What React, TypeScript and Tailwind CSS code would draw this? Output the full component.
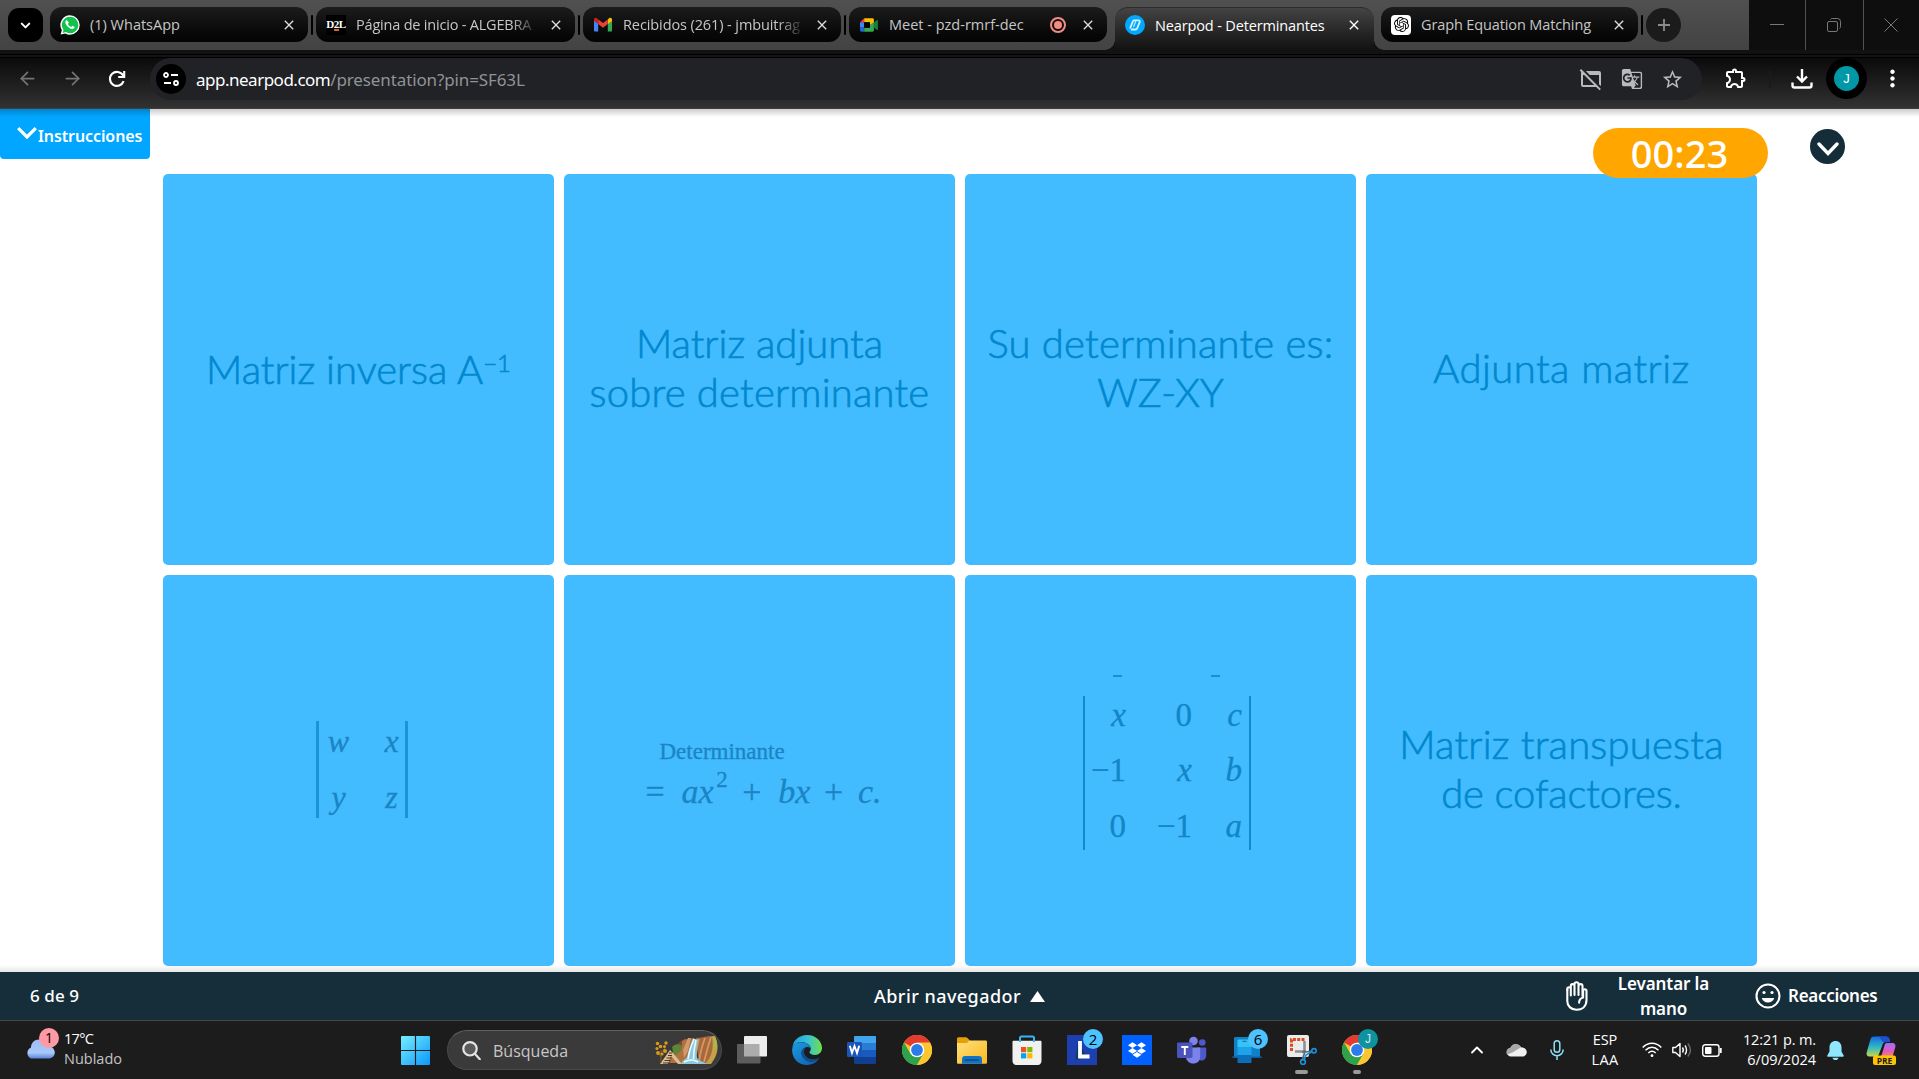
import type { ReactNode } from "react";
import {
  MdClose,
  MdGTranslate,
  MdMoreVert,
  MdOutlineExtension,
  MdStarBorder,
  MdWebAssetOff,
} from "react-icons/md";
import { FaDropbox } from "react-icons/fa6";
import { SiOpenai } from "react-icons/si";
import { ArrowLeft, ArrowRight, ChevronDown, ChevronUp } from "lucide-react";

/* ---------- Favicons ---------- */

function WhatsAppIcon() {
  return (
    <svg viewBox="0 0 20 20" className="size-5">
      <path d="M10 0.3a9.7 9.7 0 0 1 0 19.4c-1.7 0-3.3-.4-4.700-1.200L.6 19.600l1.300-4.500A9.700 9.700 0 0 1 10 .3z" fill="#fff" />
      <path d="M10 1.700a8.300 8.300 0 1 1-4.300 15.400l-3.100.8.900-3A8.300 8.300 0 0 1 10 1.700z" fill="#12c24c" />
      <path d="M7.200 5.600c-.3-.5-.9-.5-1.300 0-1.200 1.500-.5 3.500 1.400 5.700 2 2.200 4.700 3.500 6.400 2.300.9-.7 1-1.600.7-1.900l-1.900-.9c-.5-.2-.7.800-1.300 1.100-.6.200-3.300-2.100-3.200-2.900.1-.5.900-.8.700-1.400z" fill="#fff" />
    </svg>
  );
}

function D2LIcon() {
  return (
    <div className="flex size-5 flex-col items-center justify-center bg-black font-['Liberation_Serif',serif] text-[11px] leading-[10px] font-bold tracking-[-0.4px] text-white">
      <span>D2L</span>
      <span className="h-[2px] w-[5px] bg-[#d9622b]" />
    </div>
  );
}

function GmailIcon() {
  return (
    <svg viewBox="0 0 20 20" className="size-5">
      <path d="M1 5v10.500c0 .6.400 1 1 1h3.200V8z" fill="#4285f4" />
      <path d="M19 5v10.500c0 .6-.4 1-1 1h-3.200V8z" fill="#34a853" />
      <path d="M14.800 4.500V9L19 5.900V4.600c0-1.500-1.700-2.400-2.900-1.400z" fill="#fbbc04" />
      <path d="M5.200 9V4.500L10 8.100l4.800-3.600V9L10 12.700z" fill="#ea4335" />
      <path d="M1 4.600v1.300L5.200 9V4.500L3.900 3.300C2.700 2.300 1 3.100 1 4.600z" fill="#c5221f" />
    </svg>
  );
}

function MeetIcon() {
  return (
    <svg viewBox="0 0 20 20" className="size-5">
      <path d="M1 7.300h4.200v5.400H1z" fill="#4285f4" />
      <path d="M1 12.700h4.200v4H2.400c-.8 0-1.400-.6-1.400-1.400z" fill="#1967d2" />
      <path d="M5.200 3.200v4.100H1z" fill="#ea4335" />
      <path d="M5.200 3.200h8.300c.8 0 1.400.6 1.400 1.400v3.200L11 10.300V7.300H5.200z" fill="#fbbc04" />
      <path d="M5.200 12.700H11V9.600l3.900-2.200v7.900c0 .8-.6 1.400-1.400 1.400H5.200z" fill="#34a853" />
      <path d="M14.900 7.500l3-2.500c.4-.3 1 0 1 .5v9c0 .5-.6.800-1 .5l-3-2.500z" fill="#188038" />
      <path d="M5.200 7.300H11v5.400H5.200z" fill="#000" />
    </svg>
  );
}

function NearpodIcon() {
  return (
    <svg viewBox="0 0 20 20" className="size-5">
      <circle cx="10" cy="10" r="10" fill="#00a8ff" />
      <path d="M5 13.300L8 6.200c.3-.6.700-.9 1.300-.9h4.300c1 0 1.500.6 1.200 1.500l-2.700 6.700c-.3.700-.7 1-1.400 1H5.900" fill="none" stroke="#fff" strokeWidth="1.800" strokeLinejoin="round" opacity=".85" />
      <path d="M8.500 12l2.300-5.800" stroke="#fff" strokeWidth="1.100" opacity=".8" />
    </svg>
  );
}

/* ---------- Browser window ---------- */

function Tab({
  icon,
  title,
  extra,
  className,
  textClass,
}: {
  icon: ReactNode;
  title: string;
  extra?: ReactNode;
  className: string;
  textClass: string;
}) {
  return (
    <div className={`mt-[7px] flex h-[35px] items-center rounded-[12px] bg-linear-to-b from-[#1c1c1c] to-[#040404] pr-[11px] pl-[10px] text-[#c6c6c6] ${className}`}>
      {icon}
      <span className={`mt-px ml-[10px] flex-1 whitespace-nowrap ${textClass}`}>{title}</span>
      {extra}
      <MdClose className="ml-[9px] size-[16px] shrink-0 text-[#dedede]" />
    </div>
  );
}

function Divider() {
  return <div className="mx-[3px] mt-[15px] h-5 w-[2px] rounded-full bg-black" />;
}

function TabStrip() {
  return (
    <div className="flex h-[50px] items-start bg-linear-to-b from-[#505050] to-[#434343] font-['Open_Sans',sans-serif] text-[14.5px]">
      <div className="mt-2 ml-2 flex h-[34px] w-[35px] items-center justify-center rounded-[11px] bg-black text-white">
        <ChevronDown className="size-[15px]" strokeWidth={3.200} />
      </div>
      <Tab className="ml-[7px] w-[258px]" icon={<WhatsAppIcon />} title="(1) WhatsApp" textClass="" />
      <Divider />
      <Tab
        className="w-[259px]"
        icon={<D2LIcon />}
        title="Página de inicio - ALGEBRA"
        textClass="tracking-[-0.2px] mask-r-from-85% mask-r-to-100%"
      />
      <Divider />
      <Tab
        className="w-[258px]"
        icon={<GmailIcon />}
        title="Recibidos (261) - jmbuitrag"
        textClass="tracking-[-0.1px] mask-r-from-85% mask-r-to-100%"
      />
      <Divider />
      <Tab
        className="w-[258px]"
        icon={<MeetIcon />}
        title="Meet - pzd-rmrf-dec"
        textClass=""
        extra={
          <span className="mr-[5px] flex size-4 items-center justify-center rounded-full border-2 border-[#f28b82]">
            <span className="size-2 rounded-full bg-[#f28b82]" />
          </span>
        }
      />
      <div className="relative mt-[7px] ml-[8px] flex h-[43px] w-[259px] rounded-t-[13px] border-t border-[#2c2c2c] bg-linear-to-b from-[#444] to-[#121212] pr-[12px] pl-[10px] text-white">
        <span className="absolute bottom-0 -left-[10px] size-[10px] bg-[radial-gradient(circle_at_top_left,transparent_9.5px,#121212_10px)]" />
        <span className="absolute -right-[10px] bottom-0 size-[10px] bg-[radial-gradient(circle_at_top_right,transparent_9.5px,#121212_10px)]" />
        <div className="flex h-[34px] w-full items-center">
          <NearpodIcon />
          <span className="mt-px ml-[10px] flex-1 tracking-[-0.14px] whitespace-nowrap">Nearpod - Determinantes</span>
          <MdClose className="size-[16px] text-white" />
        </div>
      </div>
      <Tab
        className="ml-[7px] w-[257px]"
        icon={
          <span className="flex size-5 items-center justify-center rounded-[4px] bg-white text-black">
            <SiOpenai className="size-[15px]" />
          </span>
        }
        title="Graph Equation Matching"
        textClass="tracking-[-0.12px]"
      />
      <Divider />
      <div className="mt-2 flex h-[34px] w-[35px] items-center justify-center rounded-full bg-[#1b1b1b]">
        <svg viewBox="0 0 14 14" className="size-[14px]" stroke="#8c8c8c" strokeWidth="1.800">
          <path d="M7 1v12M1 7h12" />
        </svg>
      </div>
      <div className="ml-auto flex h-[50px] w-[170px] divide-x divide-[#525252] bg-[#0e0e0e] text-[#787878]">
        <div className="flex w-[57px] items-center justify-center">
          <svg viewBox="0 0 14 14" className="size-[14px]" stroke="currentColor"><path d="M0 6.500h14" /></svg>
        </div>
        <div className="flex w-[58px] items-center justify-center pr-[2px]">
          <svg viewBox="0 0 14 14" className="size-[14px]" stroke="currentColor" fill="none">
            <rect x=".5" y="3.500" width="10" height="10" rx="1.500" />
            <path d="M3.500 1.500c.4-.6 1-1 1.800-1h5.200a3 3 0 0 1 3 3v5.200c0 .8-.4 1.400-1 1.800" />
          </svg>
        </div>
        <div className="flex flex-1 items-center justify-center pr-[2px]">
          <svg viewBox="0 0 14 14" className="size-[14px]" stroke="currentColor"><path d="M.5.5l13 13M13.500.5l-13 13" /></svg>
        </div>
      </div>
    </div>
  );
}

function Toolbar() {
  return (
    <div className="flex h-[59px] flex-col font-['Noto_Sans',sans-serif]">
      <div className="h-1 bg-[#121212]" />
      <div className="h-px bg-black" />
      <div className="h-[2px] bg-[#141414]" />
      <div className="h-px bg-black" />
      <div className="flex h-[51px] items-start border-b border-[#423e3e] bg-linear-to-b from-[#0b0b0b] to-[#323232]">
        <ArrowLeft className="mt-[10px] ml-[17px] size-[21px] text-[#747474]" strokeWidth={2} />
        <ArrowRight className="mt-[10px] ml-[24px] size-[21px] text-[#747474]" strokeWidth={2} />
        <svg viewBox="0 0 18 18" className="mt-[12px] ml-[25px] size-[18px]" fill="none" stroke="#fff" strokeWidth="2.100">
          <path d="M15.600 11.200A7 7 0 1 1 15 5.300l1 1.200" />
          <path d="M16.200 1v6h-6" />
        </svg>
        <div className="ml-[24px] flex h-[42px] w-[1552px] items-center rounded-[21px] bg-[#202226]">
          <div className="ml-[6px] flex size-[30px] items-center justify-center rounded-full bg-black">
            <svg viewBox="0 0 16 16" className="size-4" fill="none" stroke="#fff" strokeWidth="1.800">
              <circle cx="3" cy="4" r="2" />
              <path d="M8 4h7M1 12h7" />
              <circle cx="13" cy="12" r="2" />
            </svg>
          </div>
          <div className="mt-px ml-[10px] text-[17px] text-[#909396]">
            <span className="tracking-[-0.5px] text-white">app.nearpod.com</span>
            <span className="tracking-[-0.12px]">/presentation?pin=SF63L</span>
          </div>
          <div className="ml-auto flex items-center gap-[18px] pr-[18px] text-[#b9babb]">
            <MdWebAssetOff className="size-[24px]" />
            <MdGTranslate className="size-[22px]" />
            <MdStarBorder className="size-[23px]" />
          </div>
        </div>
        <MdOutlineExtension className="mt-[8px] ml-[22px] size-[24px] text-white" />
        <div className="mt-[12px] ml-[21px] h-[18px] w-[2px] bg-[#1a1a1a]" />
        <svg viewBox="0 0 22 20" className="mt-[11px] ml-[20px] h-5 w-[22px]" fill="none" stroke="#fff" strokeWidth="2.400">
          <path d="M11 0v12M6 7.500l5 5 5-5M1.500 13.500v3c0 1.200.800 2 2 2h15c1.200 0 2-.8 2-2v-3" />
        </svg>
        <div className="ml-[13px] flex size-[41px] items-center justify-center rounded-full bg-black">
          <div className="flex size-[25px] items-center justify-center rounded-full bg-[#0097a7] font-['Liberation_Sans',sans-serif] text-[13px] text-white">J</div>
        </div>
        <MdMoreVert className="mt-[7px] ml-[12px] size-[27px] text-white" />
      </div>
    </div>
  );
}

/* ---------- Memory board ---------- */

function Card({ children }: { children: ReactNode }) {
  return (
    <div className="flex h-[391px] flex-col items-center justify-center rounded-[5px] bg-[#42bcff] text-[40px] leading-[49px] font-light whitespace-nowrap text-[#0288cf]">
      {children}
    </div>
  );
}

function CardText({ children }: { children: ReactNode }) {
  return (
    <div className="-mt-[3px] flex flex-col items-center font-['Lato',sans-serif] [-webkit-text-stroke:0.7px_#0288cf]">
      {children}
    </div>
  );
}

function WxyzDeterminant() {
  return (
    <div className="mb-[3px] ml-[7px] grid h-[97px] w-[92px] grid-cols-2 grid-rows-[56px_41px] border-x-[3px] border-[#1b94d7] text-center font-['Liberation_Serif',serif] text-[32px] leading-[40px] font-normal text-[#1b84c4] italic [-webkit-text-stroke:0.3px_#1b84c4]">
      <span className="mr-1">w</span>
      <span className="ml-4">x</span>
      <span className="mr-1">y</span>
      <span className="ml-4">z</span>
    </div>
  );
}

function QuadraticDeterminant() {
  return (
    <div className="mt-[9px] ml-2 w-[236px] font-['Liberation_Serif',serif] font-normal text-[#1b84c4] [-webkit-text-stroke:0.3px_#1b84c4]">
      <div className="ml-[14px] text-[23px] leading-[30px]">Determinante</div>
      <div className="mt-[4px] flex text-[34px] leading-[42px]">
        <span className="w-9">=</span>
        <span className="w-[35px] italic">ax</span>
        <span className="-mt-[9px] w-[26px] text-[23px] leading-[36px]">2</span>
        <span className="w-[36px]">+</span>
        <span className="w-[46px] italic">bx</span>
        <span className="w-[34px]">+</span>
        <span className="italic">c.</span>
      </div>
    </div>
  );
}

function CubicDeterminant() {
  return (
    <div className="-mt-[17px] ml-[13px] w-[168px] font-['Liberation_Serif',serif] font-normal text-[#1285c8] [-webkit-text-stroke:0.3px_#1285c8]">
      <div className="flex h-[21px] items-start pl-[30px]">
        <span className="h-[2px] w-[9px] bg-[#178fd4]" />
        <span className="ml-[89px] h-[2px] w-[9px] bg-[#178fd4]" />
      </div>
      <div className="grid h-[154px] grid-cols-[41px_66px_50px] grid-rows-[55px_56px_43px] border-x-2 border-[#1288ce] text-right text-[33px] leading-[38px]">
        <i>x</i>
        <span>0</span>
        <i>c</i>
        <span>−1</span>
        <i>x</i>
        <i>b</i>
        <span>0</span>
        <span>−1</span>
        <i>a</i>
      </div>
    </div>
  );
}

function Lesson() {
  return (
    <div className="relative h-[863px] overflow-hidden bg-white font-['Noto_Sans',sans-serif]">
      <div className="grid grid-cols-[repeat(4,391px)] gap-[10px] pt-[65px] pl-[163px]">
        <Card>
          <CardText>
            <span className="mt-[3px] flex">
              Matriz inversa A
              <span className="-mt-[7px] text-[24px]">−1</span>
            </span>
          </CardText>
        </Card>
        <Card>
          <CardText>
            <span>Matriz adjunta</span>
            <span className="tracking-[0.2px]">sobre determinante</span>
          </CardText>
        </Card>
        <Card>
          <CardText>
            <span className="tracking-[0.2px]">Su determinante es:</span>
            <span>WZ-XY</span>
          </CardText>
        </Card>
        <Card>
          <CardText>
            <span className="tracking-[0.450px]">Adjunta matriz</span>
          </CardText>
        </Card>
        <Card>
          <WxyzDeterminant />
        </Card>
        <Card>
          <QuadraticDeterminant />
        </Card>
        <Card>
          <CubicDeterminant />
        </Card>
        <Card>
          <CardText>
            <span className="tracking-[0.2px]">Matriz transpuesta</span>
            <span className="tracking-[-0.1px]">de cofactores.</span>
          </CardText>
        </Card>
      </div>

      <button className="absolute top-0 left-0 flex h-[50px] w-[150px] items-center rounded-b-[4px] bg-[#00a6ff] pl-[17px] text-white">
        <svg viewBox="0 0 20 12" className="mb-[2px] h-3 w-5" fill="none" stroke="#fff" strokeWidth="3.200">
          <path d="M1.200 1.200L10 10l8.800-8.800" />
        </svg>
        <span className="mt-[3px] ml-px text-[16px] font-semibold tracking-[-0.1px]">Instrucciones</span>
      </button>
      <div className="absolute top-[19px] right-[151px] flex h-[50px] w-[175px] items-center justify-center rounded-full bg-[#ffa700] pr-[2px] text-[38px] font-medium text-white">
        <span>00:23</span>
      </div>
      <button className="absolute top-5 right-[74px] flex size-[35px] items-center justify-center rounded-full bg-[#152c39]">
        <svg viewBox="0 0 22 14" className="mt-1 h-[14px] w-[22px]" fill="none" stroke="#fff" strokeWidth="3.400" strokeLinecap="round">
          <path d="M2 2l9 9.500L20 2" />
        </svg>
      </button>
      <div className="absolute inset-x-0 top-0 h-2 bg-linear-to-b from-black/20 to-transparent" />
      <div className="absolute inset-x-0 bottom-0 h-[7px] bg-linear-to-t from-black/10 to-transparent" />
    </div>
  );
}

function LessonFooter() {
  return (
    <div className="flex h-12 items-center bg-[#162e3a] font-['Noto_Sans',sans-serif] text-[17px] font-medium text-white">
      <span className="w-[874px] pl-[30px] tracking-[0.1px]">6 de 9</span>
      <span className="flex w-[692px] items-center text-[18px] tracking-[0.450px]">
        Abrir navegador
        <svg viewBox="0 0 15 11" className="ml-[9px] h-[11px] w-[15px]" fill="#fff">
          <path d="M7.500 0L15 11H0z" />
        </svg>
      </span>
      <svg viewBox="0 0 22 30" className="h-[30px] w-[22px]" fill="none" stroke="#fff" strokeWidth="2.100" strokeLinecap="round" strokeLinejoin="round">
        <path d="M1.300 8.500v11.700c0 5 4 8.600 9.200 8.600 5.500 0 9.800-3.200 10-9.500V10c0-2.400-3.400-2.400-3.400 0v6.500c-2.600.7-4 2.600-4 5.300" />
        <path d="M1.300 9V8c0-2.400 3.500-2.400 3.500 0v6.500V5c0-2.500 3.700-2.500 3.700 0v9V3c0-2.400 4-2.400 4 0v11V5c0-2.500 4-2.500 4 0v10" />
      </svg>
      <span className="ml-[27px] w-[97px] text-center text-[17px] leading-[25px] font-semibold tracking-[-0.1px]">
        Levantar la mano
      </span>
      <svg viewBox="0 0 26 26" className="ml-[43px] size-[26px]" fill="none">
        <circle cx="13" cy="13" r="11.500" stroke="#fff" strokeWidth="2.100" />
        <circle cx="9" cy="9.500" r="1.600" fill="#fff" />
        <circle cx="17" cy="9.500" r="1.600" fill="#fff" />
        <path d="M6.800 15h12.400c-.7 2.800-3.200 4.500-6.200 4.500S7.500 17.800 6.800 15z" fill="#fff" />
      </svg>
      <span className="ml-[7px] text-[17px] font-semibold tracking-[-0.3px]">Reacciones</span>
    </div>
  );
}

/* ---------- Taskbar ---------- */

function AppSlot({ children, badge, indicator }: { children: ReactNode; badge?: ReactNode; indicator?: string }) {
  return (
    <div className="relative flex h-[58px] w-[55px] items-center justify-center pb-px">
      {children}
      {badge}
      {indicator && <span className={`absolute bottom-[5px] h-1 rounded-full bg-[#9a9a9a] ${indicator}`} />}
    </div>
  );
}

function CountBadge({ children }: { children: ReactNode }) {
  return (
    <span className="absolute top-[8px] left-[29px] flex size-5 items-center justify-center rounded-full bg-[#4cc2ff] text-[15px] leading-none text-black">
      {children}
    </span>
  );
}

function ChromeIcon() {
  return (
    <svg viewBox="0 0 30 30" className="size-[30px]">
      <circle cx="15" cy="15" r="15" fill="#f9c32d" />
      <path d="M15 15L2 7.500A15 15 0 0 1 28 7.500z" fill="#e43b30" />
      <path d="M2 7.500A15 15 0 0 0 15 30l6.500-11.200H15L8.500 18.700z" fill="#2da14c" />
      <path d="M15 7.500h13A15 15 0 0 1 15 30l6.500-11.200z" fill="#fbc62f" />
      <circle cx="15" cy="15" r="7.300" fill="#fff" />
      <circle cx="15" cy="15" r="5.900" fill="#2c7be9" />
    </svg>
  );
}

function EdgeIcon() {
  return (
    <svg viewBox="0 0 30 30" className="size-[30px]">
      <defs>
        <linearGradient id="edgeTop" x1="0" x2="1">
          <stop offset="0" stopColor="#1f9fe0" />
          <stop offset=".5" stopColor="#35c1d6" />
          <stop offset="1" stopColor="#6ee04c" />
        </linearGradient>
        <linearGradient id="edgeLow" x1="0" y1="0" x2="1" y2="1">
          <stop offset="0" stopColor="#1b9de2" />
          <stop offset="1" stopColor="#0f5ba8" />
        </linearGradient>
      </defs>
      <path d="M.3 13C1 5 7.500 0 15 0c9 0 15 6.500 15 13 0 4-3 7-7 7-3.500 0-5.500-1.300-5.500-2.400 0-1 1.300-1.500 1.300-4C18.800 10 14 7 9 7 5 7 1.500 9.500.3 13z" fill="url(#edgeTop)" />
      <path d="M.2 14C.8 10 4.500 7.300 9 7.300c5 0 9.500 3 9.600 6.300-1.600-2.600-7-2-8.600 2-2 5 2.500 11 9 11 3.500 0 6-1.300 7.500-2.300C24 28 19.800 30 15 30 6.500 30-.6 23 .2 14z" fill="url(#edgeLow)" />
      <path d="M10 15.600c-2 5 2.500 11 9 11 3.500 0 6-1.300 7.500-2.300l1-1.500c-8 3.700-15.500 0-15.500-6 0-2 1-3.500 2.300-4.300-1.900.1-3.500 1.300-4.300 3.100z" fill="#0d4f92" />
    </svg>
  );
}

function WordIcon() {
  return (
    <svg viewBox="0 0 30 30" className="size-[30px]">
      <path d="M7 2.200C7 1.500 7.500 1 8.200 1h20c.5 0 .8.500.8 1.200V8H7z" fill="#41a5ee" />
      <path d="M7 8h22v7H7z" fill="#2b7cd3" />
      <path d="M7 15h22v7H7z" fill="#185abd" />
      <path d="M7 22h22v5.800c0 .7-.4 1.200-1 1.200H8.200c-.7 0-1.200-.5-1.200-1.200z" fill="#103f91" />
      <rect y="7" width="15" height="15" rx="1.300" fill="#1a56b8" />
      <path d="M2.800 10.800L5 18l2.500-7 2.500 7 2.200-7.200" fill="none" stroke="#fff" strokeWidth="1.900" />
    </svg>
  );
}

function FolderIcon() {
  return (
    <svg viewBox="0 0 30 30" className="size-[30px]">
      <defs>
        <linearGradient id="folder" x1="0" y1="0" x2="1" y2="1">
          <stop offset="0" stopColor="#ffe07a" />
          <stop offset="1" stopColor="#f9b821" />
        </linearGradient>
      </defs>
      <path d="M0 4c0-1 .6-1.800 1.600-1.800h7.200c.7 0 1.200.2 1.600.7L13 5.500V12H0z" fill="#e3a008" />
      <path d="M0 9.500V8h10l2.500-2.500h16c1 0 1.500.6 1.500 1.500v20.500c0 .8-.6 1.300-1.300 1.300H1.300C.5 28.800 0 28.300 0 27.500z" fill="url(#folder)" />
      <path d="M5 28.800V24c0-1.700 1.200-3 3-3h14c1.800 0 3 1.300 3 3v4.800z" fill="#1272c4" />
      <path d="M8.500 25h13" stroke="#0a4a86" strokeWidth="1.400" strokeLinecap="round" />
    </svg>
  );
}

function StoreIcon() {
  return (
    <svg viewBox="0 0 30 30" className="size-[30px]">
      <path d="M.5 7c0-.8.500-1.300 1.200-1.300h26.600c.7 0 1.200.5 1.200 1.300v19c0 2.200-1.500 4-3.700 4H4.200C2 30 .5 28.200.5 26z" fill="#f1f1f1" />
      <path d="M8 7V3c0-1 .5-1.500 1.500-1.500h11c1 0 1.500.5 1.500 1.500v4" fill="none" stroke="#35b6f2" strokeWidth="2" />
      <path d="M9 12h5.200v5.200H9z" fill="#f25022" />
      <path d="M15.200 12h5.200v5.200h-5.200z" fill="#7fba00" />
      <path d="M9 18.200h5.200v5.200H9z" fill="#00a4ef" />
      <path d="M15.200 18.200h5.200v5.200h-5.200z" fill="#ffb900" />
    </svg>
  );
}

function TeamsIcon() {
  return (
    <svg viewBox="0 0 30 30" className="size-[30px]">
      <circle cx="25.300" cy="7.500" r="3.300" fill="#5059c9" />
      <circle cx="16.500" cy="6" r="4.300" fill="#7b83eb" />
      <path d="M20 12.500h8c.7 0 1.200.5 1.200 1.200v6.500c0 3-2 5.300-4.700 5.300-2.600 0-4.500-2-4.500-4.500z" fill="#5059c9" />
      <path d="M9 12.500h13c.7 0 1.200.5 1.200 1.200v8c0 4-3 6.800-7 6.800S9 25.500 9 21.700z" fill="#7b83eb" />
      <rect y="7.500" width="15.500" height="15.500" rx="1.300" fill="#4b53bc" />
      <path d="M4.300 12h7M7.800 12v8" stroke="#fff" strokeWidth="1.900" />
    </svg>
  );
}

function PhoneLinkIcon() {
  return (
    <svg viewBox="0 0 30 30" className="size-[30px]">
      <path d="M2 3.500C2 2.500 2.500 2 3.500 2h23c1 0 1.500.5 1.500 1.500V22H2z" fill="#1080c8" />
      <path d="M0 21.500h30c0 1-.6 1.600-1.600 1.600H1.600C.6 23.100 0 22.500 0 21.500z" fill="#0c5f9e" />
      <path d="M5.500 6c0-1 .5-1.500 1.500-1.500h11c1 0 1.500.5 1.500 1.500v6h-14z" fill="#35c3f5" />
      <path d="M5.500 12h14v8h-14z" fill="#1ea3e8" />
      <path d="M5.500 20h14v7c0 .6-.4 1-1 1h-12c-.6 0-1-.4-1-1z" fill="#0c6db8" />
      <path d="M10.500 6.300h4" stroke="#0c5f9e" strokeWidth="1" />
    </svg>
  );
}

function SnipIcon() {
  return (
    <svg viewBox="0 0 30 30" className="size-[30px]">
      <rect width="22" height="22" rx="2" fill="#ebebeb" />
      <path d="M4.500 16V4.500H18" fill="none" stroke="#dc4a1d" strokeWidth="3" strokeDasharray="3 1.300" />
      <path d="M8 16.500h9.500M17.500 6v11" stroke="#8b9299" strokeWidth="2.600" />
      <path d="M17.500 15v3l-2 6M15 17h4l6-1" fill="none" stroke="#5e6b75" strokeWidth="1.700" />
      <circle cx="27" cy="15.800" r="2.200" fill="none" stroke="#1a93dc" strokeWidth="1.600" />
      <circle cx="16" cy="27" r="2.400" fill="none" stroke="#1a93dc" strokeWidth="1.600" />
      <path d="M17 25l2-5 5.800-3.300" fill="none" stroke="#1a93dc" strokeWidth="1.700" />
    </svg>
  );
}

function CanyonArt() {
  return (
    <svg viewBox="0 0 64 30" className="h-[30px] w-[64px]">
      <path d="M14 28c2-9 8-19 16-24 4 1 6-1 9-1l-3 12-5 13z" fill="#b07040" />
      <path d="M27 5c-4 3-7 7-9 12l4 2 5-7z" fill="#7d4a2a" />
      <path d="M33 3l-5 12 1 8 4-7 3-13z" fill="#d09a6c" />
      <path d="M41 3c6 0 11-2.500 18-2 3 4 4 9 3.500 14-.5 6-4 11-9 14H44z" fill="#a9683b" />
      <path d="M44 4c-2 7-3 14-4 21M50 3c-3 8-5 15-6 24M56 2c-3 9-5 17-7 25" fill="none" stroke="#d19a62" strokeWidth="1.800" />
      <path d="M57 1.500c3-1 3-.5 4 2 3 8 1 18-5 25.500h-6c7-7 9-17 7-27.500z" fill="#c3a24a" />
      <path d="M58 3c1 4 1 9 0 13l4-3c0-4-.5-8-2-11z" fill="#a9b84a" />
      <path d="M38 3.500c-3 7-5 14-6 19-3 2-5 4-6 6.500h26c-3-2-9-3-10-6.500-1-4 0-12 1-18z" fill="#8cc8de" />
      <path d="M39 4c-3 7-5 13-6 20M41 5c-1.500 6-2.500 12-2.500 19M29 27c4-2 9-3 14 0" fill="none" stroke="#eefaff" strokeWidth="1.500" />
      <path d="M17 12c2-3 7-4 10-1 0 5-4 8-8 10z" fill="#5f8433" />
      <path d="M5 29l10-14 3 3 9 11h-4l-7-8-3 8z" fill="#d9bf93" />
      <path d="M8 28h7M9.500 25.500h6M11.500 23h5M13 20.500h4M14 18h3" stroke="#4d3521" strokeWidth="1.200" />
      <path d="M6 28V15M6 22l-3-5M6 18l4-5" fill="none" stroke="#8a5f15" strokeWidth="1" />
      <g fill="#d99a22">
        <circle cx="2.500" cy="8.500" r="1.700" />
        <circle cx="5.500" cy="11.500" r="1.800" />
        <circle cx="2" cy="13.500" r="1.600" />
        <circle cx="11" cy="8" r="1.700" />
        <circle cx="9.500" cy="11.500" r="1.500" />
        <circle cx="10" cy="16" r="2" />
        <circle cx="3" cy="18" r="1.900" />
        <circle cx="7" cy="19" r="1.600" />
      </g>
    </svg>
  );
}

function Taskbar() {
  return (
    <div className="flex h-[59px] items-center border-t border-[#464646] bg-[#1c1c1c] font-['Open_Sans',sans-serif] text-[14.5px] text-white">
      <div className="relative ml-[25px] h-[41px] w-[376px]">
        <svg viewBox="0 0 30 20" className="mt-[9px] h-5 w-[30px]">
          <defs>
            <linearGradient id="cloud" x1="0" y1="0" x2="0" y2="1">
              <stop offset="0" stopColor="#9cbcf4" />
              <stop offset=".7" stopColor="#a9c9fb" />
              <stop offset="1" stopColor="#5b83dc" />
            </linearGradient>
          </defs>
          <path d="M6 19.500a6 6 0 0 1 0-11C6 4 9.500.5 14 .5c4 0 7 2.500 8 6.500 4.500 0 7.800 2.700 7.800 6.500s-3 6-6.300 6z" fill="url(#cloud)" />
        </svg>
        <span className="absolute -top-[2px] left-[14px] flex size-5 items-center justify-center rounded-full bg-[#ff99a4] text-[14px] text-black">1</span>
        <div className="absolute -top-px left-[39px] leading-[20px]">
          <div className="tracking-[-0.7px]">17°C</div>
          <div className="text-[#c4c4c4]">Nublado</div>
        </div>
      </div>

      <svg viewBox="0 0 30 30" className="size-[29px]">
        <defs>
          <linearGradient id="win" x1="0" y1="0" x2="1" y2="1">
            <stop offset="0" stopColor="#77eeff" />
            <stop offset="1" stopColor="#0a97fb" />
          </linearGradient>
        </defs>
        <path d="M0 1Q0 0 1 0h13.400v14.400H0zM15.600 0H29q1 0 1 1v13.400H15.600zM0 15.600h14.400V30H1q-1 0-1-1zM15.600 15.600H30V29q0 1-1 1H15.600z" fill="url(#win)" />
      </svg>

      <div className="ml-[17px] flex h-10 w-[275px] items-center rounded-full border border-t-[#606060] border-r-[#4a4a4a] border-b-[#4a4a4a] border-l-[#4a4a4a] bg-[#3a3a3a] pr-[2px] pl-[14px]">
        <svg viewBox="0 0 19 19" className="size-[19px]" fill="none" stroke="#e4e4e4" strokeWidth="2.200">
          <circle cx="8" cy="7.800" r="6.700" fill="#5a5a5a" />
          <path d="M12.600 12.600l5.200 5.600" strokeLinecap="round" />
        </svg>
        <span className="mt-px ml-[12px] flex-1 text-[16px] text-[#c8c8c8]">Búsqueda</span>
        <CanyonArt />
      </div>

      <div className="ml-[2px] flex">
        <AppSlot>
          <svg viewBox="0 0 30 30" className="size-[30px]">
            <rect x="7" y="1" width="23" height="20.500" rx="1" fill="#ededed" />
            <path d="M1 9h21v12.500h1.500V27c0 1-.5 1.500-1.500 1.500H1c-.6 0-1-.5-1-1V10c0-.6.400-1 1-1z" fill="#5d5d5d" />
            <path d="M7 9h15.500v12.500H7z" fill="#adadad" />
          </svg>
        </AppSlot>
        <AppSlot><EdgeIcon /></AppSlot>
        <AppSlot><WordIcon /></AppSlot>
        <AppSlot><ChromeIcon /></AppSlot>
        <AppSlot><FolderIcon /></AppSlot>
        <AppSlot><StoreIcon /></AppSlot>
        <AppSlot badge={<CountBadge>2</CountBadge>}>
          <svg viewBox="0 0 30 30" className="size-[30px]">
            <path d="M0 0h30v30H0z" fill="#1e3faf" />
            <path d="M11 6L8.500 24.500h4L18 19z" fill="#0d3c5c" />
            <path d="M13 6v15.500h9.500" fill="none" stroke="#fff" strokeWidth="3.800" />
          </svg>
        </AppSlot>
        <AppSlot>
          <div className="flex size-[30px] items-center justify-center bg-[#0061fe] text-white">
            <FaDropbox className="size-[18px]" />
          </div>
        </AppSlot>
        <AppSlot><TeamsIcon /></AppSlot>
        <AppSlot badge={<CountBadge>6</CountBadge>}><PhoneLinkIcon /></AppSlot>
        <AppSlot indicator="w-[13px]"><SnipIcon /></AppSlot>
        <AppSlot
          indicator="w-2"
          badge={
            <span className="absolute top-[8px] left-[29px] flex size-5 items-center justify-center rounded-full bg-[#0e929f] font-['Liberation_Sans',sans-serif] text-[12px] text-[#d0eaec]">J</span>
          }
        >
          <ChromeIcon />
        </AppSlot>
      </div>

      <div className="ml-auto flex h-[58px] items-center pr-[23px]">
        <ChevronUp className="size-[20px]" strokeWidth={2.200} />
        <svg viewBox="0 0 21 14" className="ml-[19px] h-[14px] w-[21px]">
          <path d="M5 13.500a4.300 4.300 0 0 1-.7-8.500A6 6 0 0 1 15 4.300c3.500 0 5.800 2.200 5.800 4.800s-2 4.400-4.300 4.400z" fill="#f0f0f0" />
          <path d="M4.300 5A6 6 0 0 1 15 4.300L6.500 9.500 1 11.500C-.5 8.800.8 5.600 4.300 5z" fill="#a8a8a8" />
        </svg>
        <svg viewBox="0 0 14 20" className="ml-[23px] h-5 w-[14px]" fill="none" stroke="#8fdff5" strokeWidth="1.500">
          <rect x="4.200" y=".8" width="5.600" height="11.500" rx="2.800" />
          <path d="M.8 9.500a6.200 6.200 0 0 0 12.400 0M7 15.700V20" />
        </svg>
        <div className="ml-[19px] w-[44px] text-center leading-[20px]">
          <div className="tracking-[-0.1px]">ESP</div>
          <div className="tracking-[0.3px]">LAA</div>
        </div>
        <svg viewBox="0 0 20 16" className="ml-[15px] h-4 w-5" fill="none" stroke="#fff" strokeWidth="1.500">
          <path d="M.7 5.500C6-.3 14-.3 19.300 5.500" />
          <path d="M3.500 8.300c4-4 9-4 13 0" />
          <path d="M6.300 11c2.400-2.200 5-2.200 7.400 0" />
          <circle cx="10" cy="13.700" r="1.400" fill="#fff" stroke="none" />
        </svg>
        <svg viewBox="0 0 20 16" className="ml-[10px] h-4 w-5" fill="none" stroke="#fff" strokeWidth="1.400">
          <path d="M.8 5.500h2.700L8 1.500v13l-4.500-4H.8z" strokeLinejoin="round" />
          <path d="M10.500 5.500c1 1.500 1 3.500 0 5" />
          <path d="M13 3.500c2 2.500 2 6.500 0 9" />
          <path d="M15.800 1.500c3.300 4 3.300 9 0 13" stroke="#6a6a6a" />
        </svg>
        <svg viewBox="0 0 20 13" className="ml-[10px] h-[13px] w-5" fill="none" stroke="#fff" strokeWidth="1.400">
          <rect x=".7" y=".7" width="16.300" height="11.600" rx="2.500" />
          <rect x="3" y="3" width="6.500" height="7" rx="1" fill="#fff" stroke="none" />
          <path d="M18.700 4v5" strokeWidth="2" />
        </svg>
        <div className="w-[94px] text-right leading-[20px]">
          <div className="tracking-[-0.120px]">12:21 p. m.</div>
          <div>6/09/2024</div>
        </div>
        <svg viewBox="0 0 17 19" className="ml-[11px] h-[19px] w-[17px]" fill="#8fe6ff">
          <path d="M8.500 0c3.600 0 6 2.700 6 6.200v4.300l2.200 4c.3.600 0 1.200-.7 1.200H1c-.7 0-1-.6-.7-1.200l2.200-4V6.200C2.500 2.700 4.900 0 8.500 0zM5.500 16.700h6c-.3 1.400-1.500 2.300-3 2.300s-2.700-.9-3-2.300z" />
        </svg>
        <svg viewBox="0 0 30 30" className="ml-[22px] size-[30px]">
          <defs>
            <linearGradient id="copilotA" x1="0" y1="0" x2="0" y2="1">
              <stop offset="0" stopColor="#1568e0" />
              <stop offset=".5" stopColor="#2ab5c8" />
              <stop offset="1" stopColor="#c6d84a" />
            </linearGradient>
            <linearGradient id="copilotB" x1="0" y1="0" x2="0" y2="1">
              <stop offset="0" stopColor="#a46cf5" />
              <stop offset=".6" stopColor="#e25bc0" />
              <stop offset="1" stopColor="#f78b52" />
            </linearGradient>
          </defs>
          <path d="M8 1.500h12c2 0 3 1 3.500 3L24 7h-4c-2 0-3 1-3.500 2.700L13 19c-.7 2-1.500 2.500-3.300 2.500H4C1 21.500 0 19.500.8 17L4.500 4.300C5 2.400 6 1.500 8 1.500z" fill="url(#copilotA)" />
          <path d="M8 1.500h12c2 0 3 1 3.500 3L24 7h-7L15 4.500C14.300 2.500 13 1.500 11 1.500z" fill="#1a4fd0" />
          <path d="M21 8h5c3 0 4 2 3.200 4.500L26.500 22h-14c2 0 3-1 3.500-3l2.500-8.500C19 8.700 19.700 8 21 8z" fill="url(#copilotB)" />
          <rect x="7" y="20.500" width="23" height="9.500" rx="2" fill="#ffc400" />
          <text x="18.500" y="28.500" textAnchor="middle" fontSize="8.500" fontWeight="700" fontFamily="Open Sans, sans-serif" fill="#1c1c1c">PRE</text>
        </svg>
      </div>
    </div>
  );
}

export default function App() {
  return (
    <div className="h-[1079px] w-[1919px] overflow-hidden bg-[#1c1c1c]">
      <TabStrip />
      <Toolbar />
      <Lesson />
      <LessonFooter />
      <Taskbar />
    </div>
  );
}
